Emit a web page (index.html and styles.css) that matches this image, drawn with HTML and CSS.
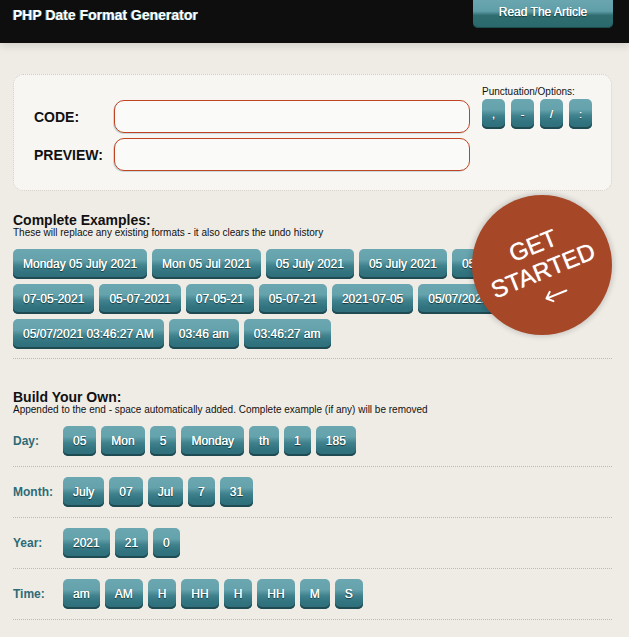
FILE: index.html
```html
<!DOCTYPE html>
<html lang="en">
<head>
<meta charset="utf-8">
<title>PHP Date Format Generator</title>
<link rel="stylesheet" href="styles.css">
</head>
<body>
<header class="topbar">
  <h1 class="brand">PHP Date Format Generator</h1>
  <a class="article-btn" href="#">Read The Article</a>
</header>
<main class="page">
  <section class="panel">
    <div class="fields">
      <div class="field"><label class="field-label">CODE:</label><input class="field-input" type="text"></div>
      <div class="field"><label class="field-label">PREVIEW:</label><input class="field-input" type="text"></div>
    </div>
    <div class="punct">
      <div class="punct-title">Punctuation/Options:</div>
      <div class="punct-btns">
        <button class="btn btn-sm">,</button>
        <button class="btn btn-sm">-</button>
        <button class="btn btn-sm">/</button>
        <button class="btn btn-sm">:</button>
      </div>
    </div>
  </section>

  <section class="examples">
    <h2 class="sec-title">Complete Examples:</h2>
    <p class="sec-sub">These will replace any existing formats - it also clears the undo history</p>
    <div class="btn-wrap">
      <button class="btn">Monday 05 July 2021</button>
      <button class="btn">Mon 05 Jul 2021</button>
      <button class="btn">05 July 2021</button>
      <button class="btn">05 July 2021</button>
      <button class="btn">05th July 2021</button>
      <button class="btn">07-05-2021</button>
      <button class="btn">05-07-2021</button>
      <button class="btn">07-05-21</button>
      <button class="btn">05-07-21</button>
      <button class="btn">2021-07-05</button>
      <button class="btn">05/07/2021</button>
      <button class="btn">05/07/2021 03:46:27 AM</button>
      <button class="btn">03:46 am</button>
      <button class="btn">03:46:27 am</button>
    </div>
    <div class="badge">
      <div class="badge-text">
        <span class="badge-line">GET</span>
        <span class="badge-line">STARTED</span>
        <svg class="badge-arrow" width="26" height="14" viewBox="0 0 26 14" aria-hidden="true">
          <path d="M24 7 H3 M8 2 L2.5 7 L8 12" fill="none" stroke="#fff" stroke-width="2" stroke-linecap="round" stroke-linejoin="round"/>
        </svg>
      </div>
    </div>
  </section>

  <section class="build">
    <h2 class="sec-title sec-title-build">Build Your Own:</h2>
    <p class="sec-sub">Appended to the end - space automatically added. Complete example (if any) will be removed</p>
    <div class="row">
      <span class="row-label">Day:</span>
      <div class="row-btns">
        <button class="btn">05</button><button class="btn">Mon</button><button class="btn">5</button><button class="btn">Monday</button><button class="btn">th</button><button class="btn">1</button><button class="btn">185</button>
      </div>
    </div>
    <div class="row">
      <span class="row-label">Month:</span>
      <div class="row-btns">
        <button class="btn">July</button><button class="btn">07</button><button class="btn">Jul</button><button class="btn">7</button><button class="btn">31</button>
      </div>
    </div>
    <div class="row">
      <span class="row-label">Year:</span>
      <div class="row-btns">
        <button class="btn">2021</button><button class="btn">21</button><button class="btn">0</button>
      </div>
    </div>
    <div class="row">
      <span class="row-label">Time:</span>
      <div class="row-btns">
        <button class="btn">am</button><button class="btn">AM</button><button class="btn">H</button><button class="btn">HH</button><button class="btn">H</button><button class="btn">HH</button><button class="btn">M</button><button class="btn">S</button>
      </div>
    </div>
  </section>
</main>
</body>
</html>
```

FILE: styles.css
```css
* { box-sizing: border-box; }

html, body {
  margin: 0;
  padding: 0;
  background: #efece6;
  font-family: "Liberation Sans", Arial, sans-serif;
  color: #111;
}

body { position: relative; min-height: 637px; overflow: hidden; }

.topbar {
  height: 43px;
  background: #0e0e0e;
  display: flex;
  justify-content: space-between;
  align-items: flex-start;
  box-shadow: 0 3px 8px rgba(0,0,0,0.12);
}

.brand {
  margin: 0;
  padding: 7px 0 0 13px;
  font-size: 14px;
  line-height: 16px;
  font-weight: bold;
  color: #fff;
  text-shadow: -1px 0 0 rgba(110,190,200,0.7);
}

.article-btn {
  display: block;
  width: 140px;
  height: 28px;
  margin-right: 16px;
  border-radius: 0 0 5px 5px;
  background: linear-gradient(#6aa6b0 0%, #5f9ea8 40%, #2f6d70 55%, #29686b 100%);
  box-shadow: inset 0 -1px 0 #1d4c4f;
  color: #fff;
  font-size: 12px;
  line-height: 24px;
  text-align: center;
  text-decoration: none;
  text-shadow: 0 0 0.6px #fff, 0 1px 1px rgba(0,0,0,0.5);
}

.page {
  padding: 0 17px 0 13px;
}

.panel {
  margin-top: 31px;
  height: 117px;
  background: #f7f6f2;
  border: 1px dotted #cfccc4;
  border-radius: 10px;
  display: flex;
  padding: 11px 20px 0 20px;
}

.fields {
  width: 436px;
  margin-top: 14px;
  display: flex;
  flex-direction: column;
  gap: 5px;
}

.field {
  display: flex;
  align-items: center;
}

.field-label {
  width: 80px;
  font-size: 14px;
  font-weight: bold;
  color: #111;
}

.field-input {
  width: 356px;
  height: 33px;
  border: 1px solid #bf4421;
  border-radius: 10px;
  background: #fafaf8;
  box-shadow: -1px 1px 0 rgba(120,160,180,0.35);
  outline: none;
}

.punct {
  margin-left: 12px;
}

.punct-title {
  font-size: 10px;
  line-height: 12px;
  color: #111;
  margin-bottom: 1px;
}

.punct-btns {
  display: flex;
  gap: 6px;
}

.btn {
  height: 30px;
  padding: 0 10px;
  border: 0;
  border-radius: 5px;
  background: linear-gradient(#6ba7b1 0%, #64a2ac 36%, #3f818c 56%, #31737f 76%, #2d6e7a 100%);
  box-shadow: inset 0 -2px 0 #1f4a52;
  color: #fff;
  font-family: "Liberation Sans", Arial, sans-serif;
  font-size: 12px;
  line-height: 28px;
  white-space: nowrap;
  text-shadow: 0 0 0.6px #fff, 0 1px 1px rgba(0,0,0,0.6);
  cursor: pointer;
}

.btn-sm {
  width: 23px;
  padding: 0;
  font-size: 11px;
}

.sec-title {
  margin: 22px 0 0;
  font-size: 14px;
  line-height: 14px;
  font-weight: bold;
  color: #111;
}

.sec-sub {
  margin: 0;
  font-size: 10px;
  line-height: 12px;
  color: #111;
}

.examples {
  position: relative;
  padding-bottom: 9px;
  border-bottom: 1px dotted #bdbab3;
}

.btn-wrap {
  margin-top: 10px;
  display: flex;
  flex-wrap: wrap;
  gap: 5px;
}

.badge {
  position: absolute;
  left: 459px;
  top: -18px;
  width: 140px;
  height: 140px;
  border-radius: 50%;
  background: #a64828;
  box-shadow: 0 0 5px 2px rgba(0,0,0,0.15);
  display: flex;
  align-items: center;
  justify-content: center;
}

.badge-text {
  transform: rotate(-22deg);
  display: flex;
  flex-direction: column;
  align-items: center;
  color: #fff;
  font-size: 24px;
  line-height: 27px;
  margin-top: 4px;
  text-shadow: 0 0 0.8px #fff;
}

.badge-line { display: block; }

.badge-arrow {
  display: block;
  margin-top: 7px;
  margin-left: 6px;
}

.sec-title-build {
  margin-top: 31px;
}

.row {
  display: flex;
  align-items: center;
  padding: 10px 0;
  border-bottom: 1px dotted #bdbab3;
}

.row-label {
  width: 50px;
  font-size: 12px;
  font-weight: bold;
  color: #2d6b77;
}

.row-btns {
  display: flex;
  gap: 5px;
}
```
